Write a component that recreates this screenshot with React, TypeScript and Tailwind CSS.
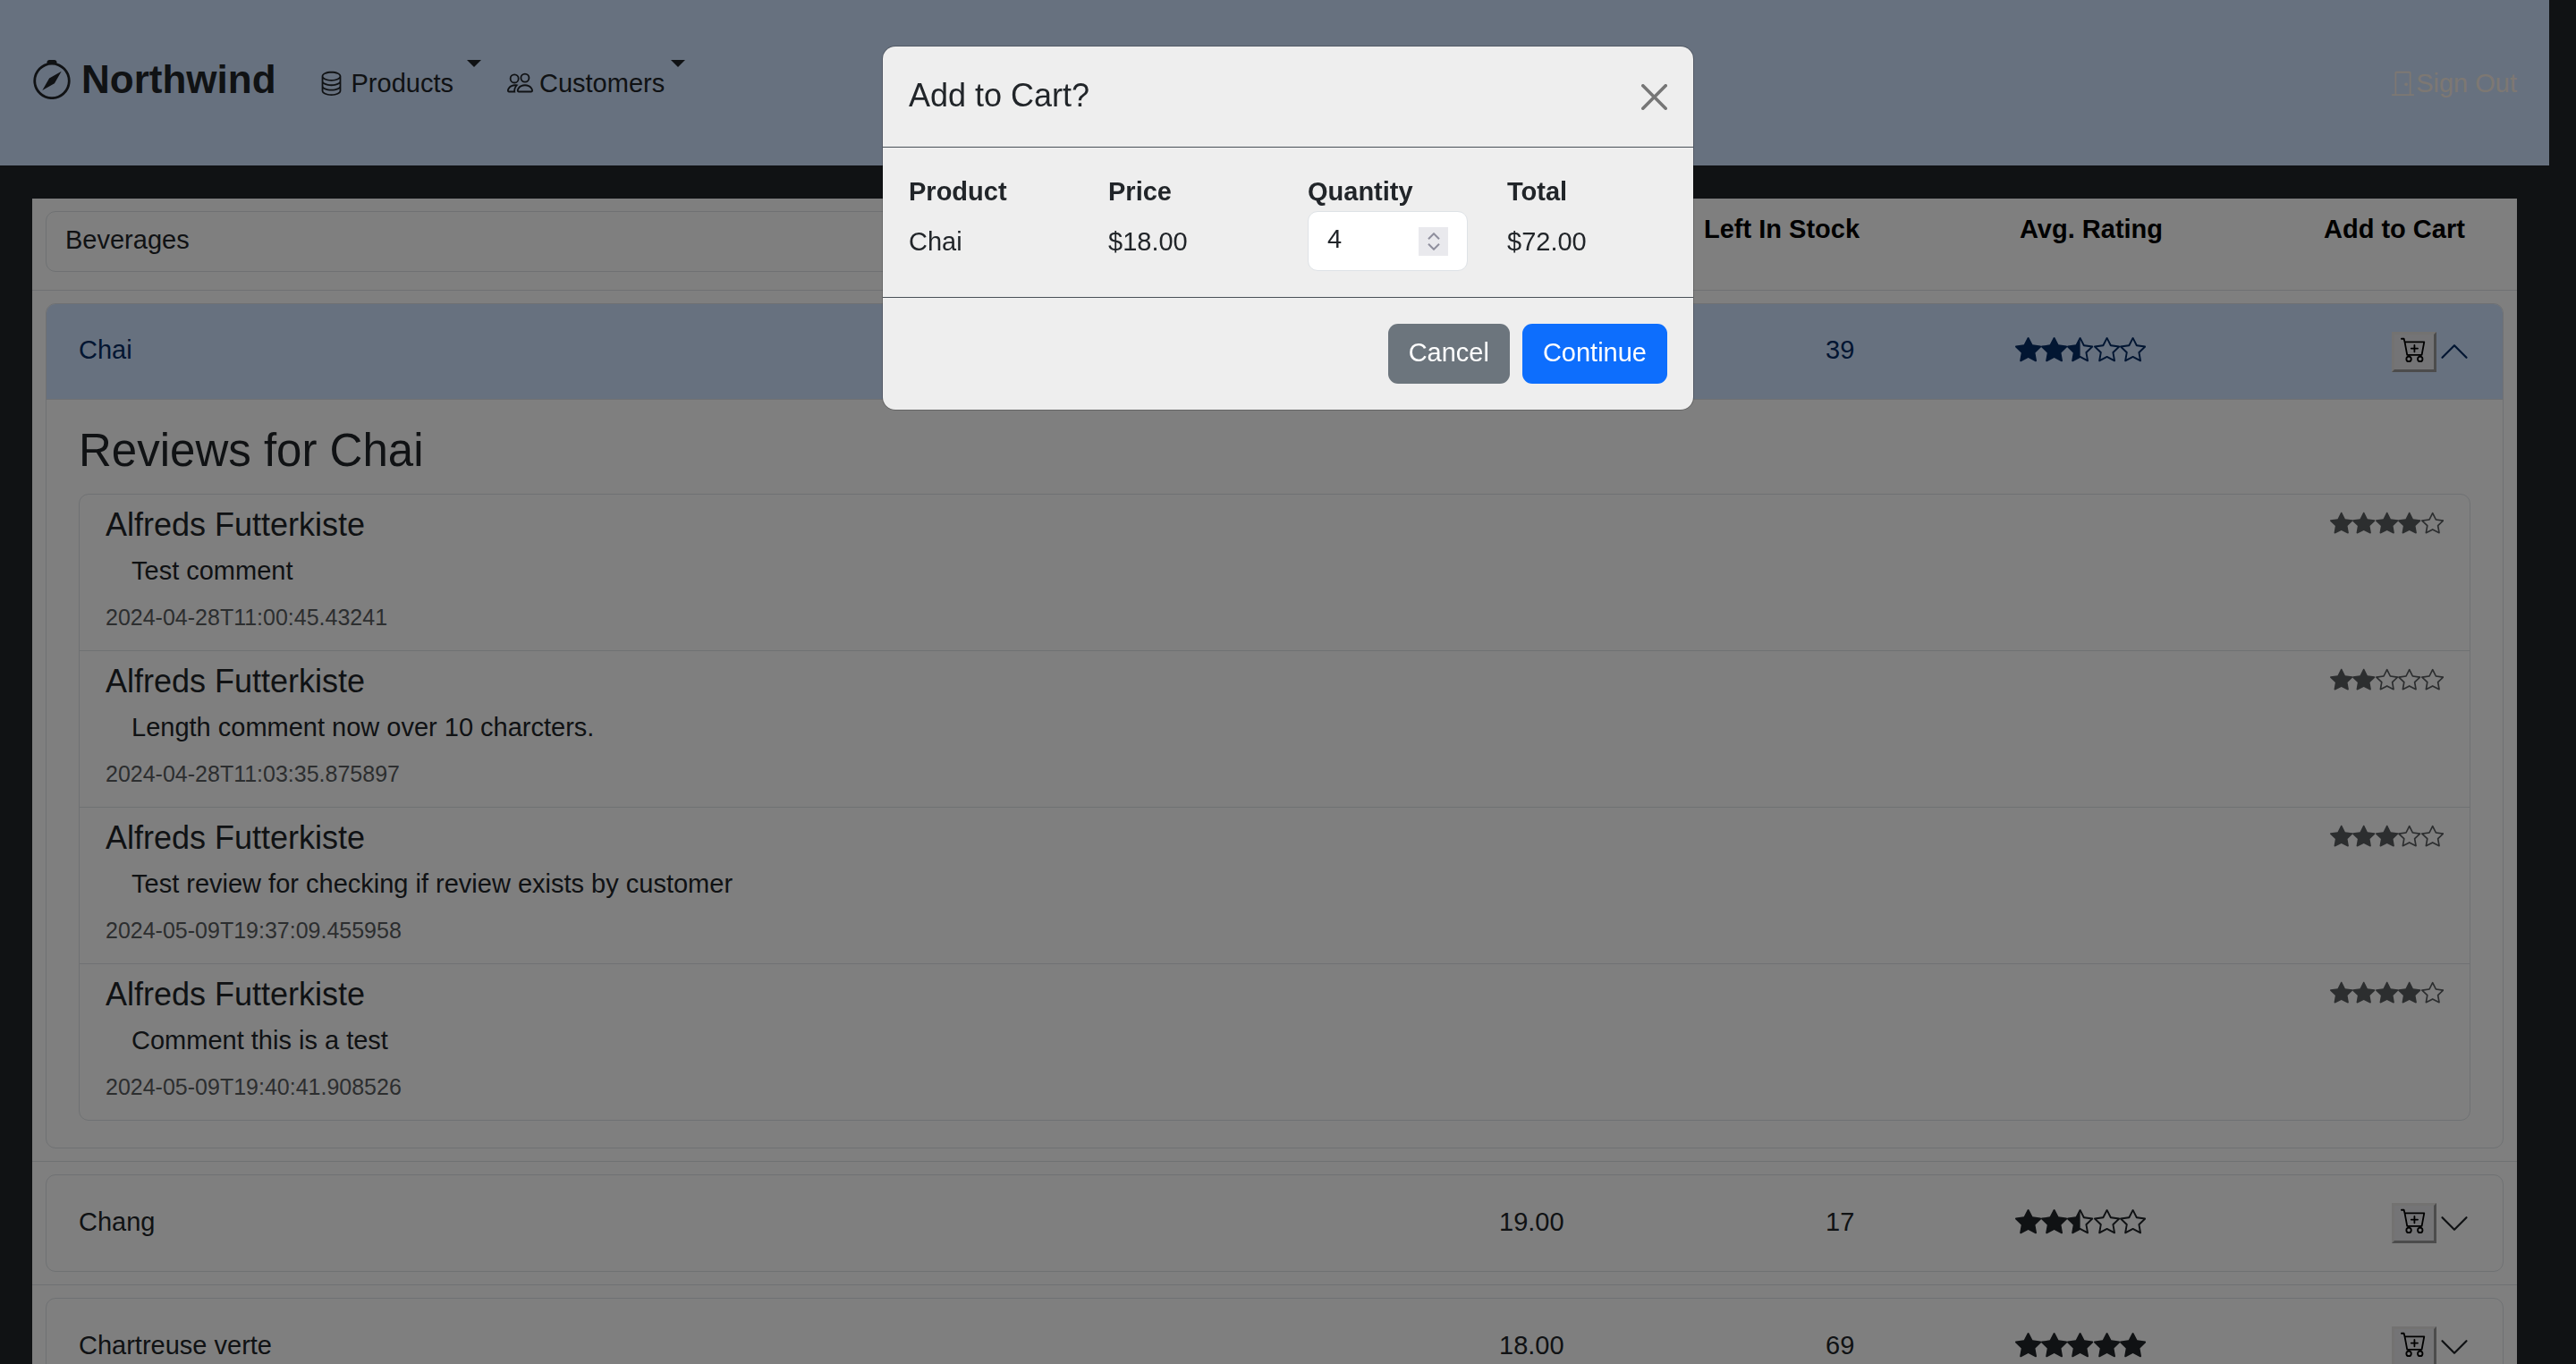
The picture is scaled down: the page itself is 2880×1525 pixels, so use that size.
import { useState } from "react";
import {
  BsCartPlus,
  BsChevronDown,
  BsChevronUp,
  BsCompass,
  BsDatabase,
  BsDoorClosed,
  BsPeople,
  BsStar,
  BsStarFill,
  BsStarHalf,
} from "react-icons/bs";

type Review = { author: string; comment: string; date: string; rating: number };
type Product = { name: string; price: string; stock: number; rating: number; reviews: Review[] };

const PRODUCTS: Product[] = [
  {
    name: "Chai",
    price: "18.00",
    stock: 39,
    rating: 2.5,
    reviews: [
      { author: "Alfreds Futterkiste", comment: "Test comment", date: "2024-04-28T11:00:45.43241", rating: 4 },
      { author: "Alfreds Futterkiste", comment: "Length comment now over 10 charcters.", date: "2024-04-28T11:03:35.875897", rating: 2 },
      { author: "Alfreds Futterkiste", comment: "Test review for checking if review exists by customer", date: "2024-05-09T19:37:09.455958", rating: 3 },
      { author: "Alfreds Futterkiste", comment: "Comment this is a test", date: "2024-05-09T19:40:41.908526", rating: 4 },
    ],
  },
  { name: "Chang", price: "19.00", stock: 17, rating: 2.5, reviews: [] },
  { name: "Chartreuse verte", price: "18.00", stock: 69, rating: 5, reviews: [] },
];

function Stars({ value, className }: { value: number; className: string }) {
  return (
    <span role="img" aria-label={`${value} out of 5`} className={`flex ${className}`}>
      {[1, 2, 3, 4, 5].map((n) => {
        const Icon = value >= n ? BsStarFill : value >= n - 0.5 ? BsStarHalf : BsStar;
        return <Icon key={n} className="h-auto min-w-0 flex-1" />;
      })}
    </span>
  );
}

function Caret() {
  return <span className="size-0 border-x-8 border-t-8 border-x-transparent border-t-current" />;
}

function Navbar() {
  return (
    <nav className="flex h-[185px] items-center bg-[#cfe2ff] px-9 text-[#212529]">
      <a href="#home" className="mr-[47px] flex items-center gap-[11px] pb-2 text-[44px] leading-[66px] font-bold">
        <BsCompass className="size-11" />
        Northwind
      </a>
      <button type="button" className="mr-[29px] flex items-center gap-2">
        <BsDatabase className="size-[29px]" />
        <span>Products</span>
        <span className="pb-1 pl-[7px]">
          <Caret />
        </span>
      </button>
      <button type="button" className="flex items-center gap-[7px]">
        <BsPeople className="size-[29px]" />
        <span>Customers</span>
        <span className="pb-1">
          <Caret />
        </span>
      </button>
      <a href="#signout" className="ml-auto flex items-center text-[#faf0e6]">
        <BsDoorClosed className="size-[29px]" />
        Sign Out
      </a>
    </nav>
  );
}

function ReviewItem({ review }: { review: Review }) {
  return (
    <li className="flex items-start justify-between border-b border-[#dee2e6] px-[29px] pt-3 pb-[15px] last:border-b-0">
      <div>
        <h5 className="mb-2 text-[36px] leading-[43px]">{review.author}</h5>
        <p className="mb-2 pl-[29px] leading-[44px]">{review.comment}</p>
        <small className="block text-[25px] leading-[44px] text-[#595c5f]">{review.date}</small>
      </div>
      <Stars value={review.rating} className="mt-[7px] w-[127px] text-[#595c5f]" />
    </li>
  );
}

function ProductRow({ product, open, onToggle }: { product: Product; open: boolean; onToggle: () => void }) {
  const Chevron = open ? BsChevronUp : BsChevronDown;
  return (
    <tr className="border-b border-[#dee2e6]">
      <td colSpan={5} className="px-[15px] py-[14px]">
        <div className="overflow-hidden rounded-[11px] border border-[#dee2e6]">
          <div
            className={`grid h-[107px] grid-cols-[1fr_365px_212px_421px_52px_36px] items-center px-9 ${
              open ? "border-b border-[#dee2e6] bg-[#cfe2ff] text-[#052c65]" : "text-[#212529]"
            }`}
          >
            <span className="pb-1">{product.name}</span>
            <span className="pb-1">{product.price}</span>
            <span className="pb-1">{product.stock}</span>
            <Stars value={product.rating} className="w-[146px] pb-1" />
            <button
              type="button"
              aria-label={`Add ${product.name} to cart`}
              className="w-[50px] border-[3px] border-t-[#e6e4e3] border-r-[#999] border-b-[#999] border-l-[#e6e4e3] bg-[#e9e9ed] px-[7px] pt-[2px] pb-2 text-black"
            >
              <BsCartPlus className="size-[29px]" />
            </button>
            <button type="button" aria-label={`Toggle ${product.name}`} aria-expanded={open} onClick={onToggle}>
              <Chevron className="size-9" />
            </button>
          </div>
          {open && (
            <div className="px-9 pt-[26px] pb-[30px] text-[#212529]">
              <h3 className="mb-[18px] text-[51px] leading-[61px]">Reviews for {product.name}</h3>
              <ul className="rounded-[11px] border border-[#dee2e6]">
                {product.reviews.map((r) => (
                  <ReviewItem key={r.date} review={r} />
                ))}
              </ul>
            </div>
          )}
        </div>
      </td>
    </tr>
  );
}

function CartModal() {
  const [qty, setQty] = useState(4);
  const label = "mb-0 block leading-[44px] font-bold";
  return (
    <div className="fixed inset-0 flex items-start justify-center bg-black/50 pt-[51px]">
      <section
        role="dialog"
        aria-modal="true"
        aria-labelledby="cart-title"
        className="w-[908px] rounded-[15px] border border-black/20 bg-[#eee] bg-clip-padding text-[#212529]"
      >
        <header className="flex items-center justify-between border-b border-[#495057] px-[29px] py-[29px]">
          <h2 id="cart-title" className="pb-[3px] text-[36px] leading-[51px]">
            Add to Cart?
          </h2>
          <button type="button" aria-label="Close" className="opacity-50">
            <svg viewBox="0 0 16 16" className="size-[29px]" fill="#000">
              <path d="M.293.293a1 1 0 0 1 1.414 0L8 6.586 14.293.293a1 1 0 1 1 1.414 1.414L9.414 8l6.293 6.293a1 1 0 0 1-1.414 1.414L8 9.414l-6.293 6.293a1 1 0 0 1-1.414-1.414L6.586 8 .293 1.707a1 1 0 0 1 0-1.414z" />
            </svg>
          </button>
        </header>
        <div className="px-[29px] pt-[27px] pb-[29px]">
          <div className="grid grid-cols-4 gap-x-11">
            <span className={label}>Product</span>
            <span className={label}>Price</span>
            <label htmlFor="qty" className={label}>
              Quantity
            </label>
            <span className={label}>Total</span>
          </div>
          <div className="grid grid-cols-4 items-center gap-x-11">
            <span>Chai</span>
            <span>$18.00</span>
            <div className="relative flex">
              <input
                id="qty"
                type="number"
                value={qty}
                onChange={(e) => setQty(Number(e.target.value))}
                className="h-[67px] w-full [appearance:textfield] rounded-[11px] border border-[#dee2e6] bg-white pr-16 pb-1 pl-[21px] [&::-webkit-inner-spin-button]:appearance-none"
              />
              <div className="absolute inset-y-0 right-[22px] my-auto flex h-8 w-[33px] flex-col items-center justify-center gap-[4px] bg-[#e9e9ed] text-[#8f8f9d]">
                <button type="button" aria-label="Increase" onClick={() => setQty(qty + 1)}>
                  <svg viewBox="0 0 14 8" className="h-2 w-[14px]" fill="none" stroke="currentColor" strokeWidth="2">
                    <path d="M1 7.200 7 1.200l6 6" />
                  </svg>
                </button>
                <button type="button" aria-label="Decrease" onClick={() => setQty(qty - 1)}>
                  <svg viewBox="0 0 14 8" className="h-2 w-[14px]" fill="none" stroke="currentColor" strokeWidth="2">
                    <path d="m1 .8 6 6 6-6" />
                  </svg>
                </button>
              </div>
            </div>
            <span>${(qty * 18).toFixed(2)}</span>
          </div>
        </div>
        <footer className="flex justify-end gap-[14px] border-t border-[#495057] p-[29px]">
          <button type="button" className="rounded-[11px] bg-[#6c757d] px-[23px] pt-[10px] pb-[13px] leading-[44px] text-white">
            Cancel
          </button>
          <button type="button" className="rounded-[11px] bg-[#0d6efd] px-[23px] pt-[10px] pb-[13px] leading-[44px] text-white">
            Continue
          </button>
        </footer>
      </section>
    </div>
  );
}

export default function App() {
  const [openName, setOpenName] = useState("Chai");
  const th = "px-[15px] pt-3 text-left align-top leading-[44px] font-bold";
  return (
    <div className="h-screen overflow-hidden bg-[#212529] pr-[30px] font-['Liberation_Sans',Arial,sans-serif] text-[29px] leading-[44px]">
      <Navbar />
      <main className="px-9 pt-[37px]">
        <table className="w-full border-collapse bg-white text-black">
          <thead>
            <tr className="border-b border-[#dee2e6]">
              <th className="px-[15px] pt-[14px] pb-5 text-left font-normal">
                <select
                  aria-label="Category"
                  className="block h-[68px] w-full appearance-none rounded-[11px] border border-[#dee2e6] bg-white pb-1 pl-[21px] text-[#212529]"
                >
                  <option>Beverages</option>
                </select>
              </th>
              <th className={`${th} w-[330px]`}>Price</th>
              <th className={`${th} w-[353px]`}>Left In Stock</th>
              <th className={`${th} w-[340px]`}>Avg. Rating</th>
              <th className={`${th} w-[231px]`}>Add to Cart</th>
            </tr>
          </thead>
          <tbody>
            {PRODUCTS.map((p) => (
              <ProductRow
                key={p.name}
                product={p}
                open={openName === p.name}
                onToggle={() => setOpenName(openName === p.name ? "" : p.name)}
              />
            ))}
          </tbody>
        </table>
      </main>
      <CartModal />
    </div>
  );
}
